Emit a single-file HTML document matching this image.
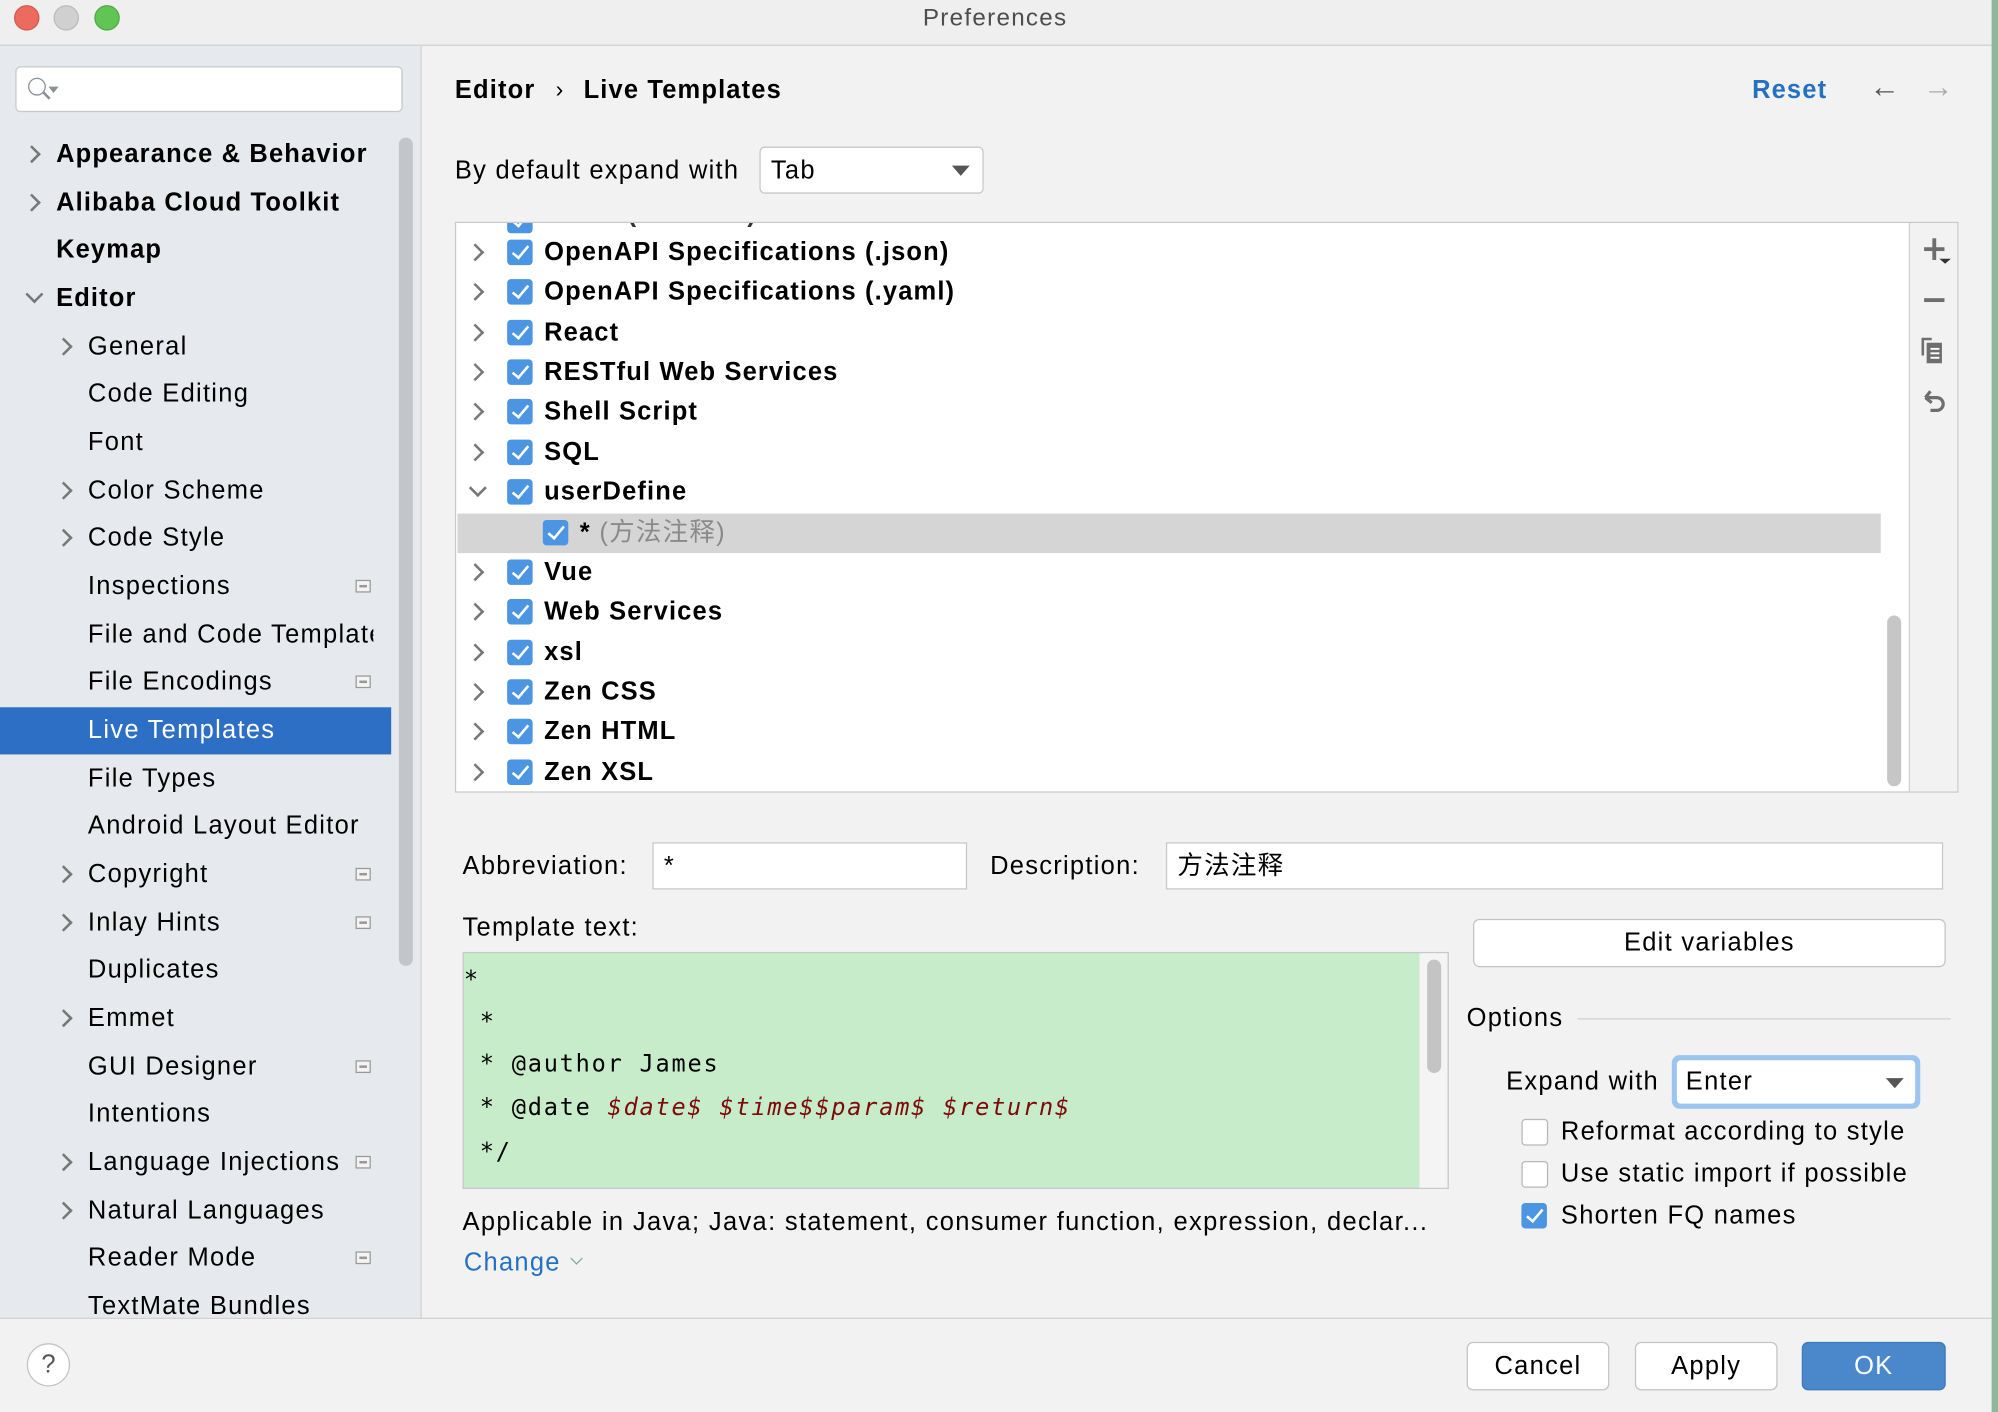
<!DOCTYPE html>
<html><head><meta charset="utf-8"><style>
html,body{margin:0;padding:0;width:1998px;height:1412px;overflow:hidden;background:#8fb89a}
#s{position:absolute;left:0;top:0;width:1568px;height:1108px;transform:scale(1.27423,1.27437);transform-origin:0 0;background:#f2f2f2;font-family:"Liberation Sans","Noto Sans CJK SC",sans-serif;color:#000;overflow:hidden}
.a{position:absolute}
.t{position:absolute;height:26px;line-height:26px;font-size:20px;white-space:nowrap;letter-spacing:1px}
.b{font-weight:bold;letter-spacing:0.9px}
.arr{position:absolute;width:8px;height:8px;border-right:2px solid #777;border-bottom:2px solid #777;transform:rotate(-45deg)}
.arrd{position:absolute;width:8px;height:8px;border-right:2px solid #777;border-bottom:2px solid #777;transform:rotate(45deg)}
.cb{position:absolute;width:20px;height:20px;border-radius:3px;background:#4b95e3}
.cb:after{content:"";position:absolute;left:7px;top:2px;width:5px;height:11px;border-right:2.5px solid #fff;border-bottom:2.5px solid #fff;transform:rotate(40deg)}
.cbe{position:absolute;width:19px;height:19px;border-radius:3px;background:#fff;border:1px solid #b8b8b8}
.ic{position:absolute;width:12px;height:10px;border:1px solid #999;box-sizing:border-box;background:#f4f4f4}
.ic:after{content:"";position:absolute;left:2px;top:3px;width:6px;height:2px;background:#999}
.btn{position:absolute;background:#fff;border:1px solid #c4c4c4;border-radius:5px;box-sizing:border-box;text-align:center;font-size:20px;letter-spacing:1px}
.inp{position:absolute;background:#fff;border:1px solid #c8c8c8;box-sizing:border-box}
.mono{position:absolute;font-family:"DejaVu Sans Mono","Liberation Mono",monospace;font-size:18.5px;letter-spacing:1.4px;white-space:pre;height:26px;line-height:26px}
</style></head><body><div id="s">
<div class="a" style="left:0;top:0;width:1568px;height:35px;background:#efefef;border-bottom:1px solid #d0d0d0"></div>
<div class="a" style="left:11px;top:4px;width:18px;height:18px;border-radius:50%;background:#ec6a5e;border:0.5px solid #d45a4f"></div>
<div class="a" style="left:42px;top:4px;width:18px;height:18px;border-radius:50%;background:#d0d0d0;border:0.5px solid #bbb"></div>
<div class="a" style="left:74px;top:4px;width:18px;height:18px;border-radius:50%;background:#61c554;border:0.5px solid #50a846"></div>
<div class="t" style="left:0;width:1562px;text-align:center;top:2px;color:#4d4d4d;font-size:19px">Preferences</div>
<div class="a" style="left:1563px;top:0;width:5px;height:1108px;background:#8fb89a"></div>

<div class="a" style="left:0;top:36px;width:330px;height:998px;background:#e6e9ed;border-right:1px solid #d4d4d4"></div>
<div class="a" style="left:12px;top:52px;width:304px;height:36px;background:#fff;border:1.5px solid #c8c8c8;border-radius:4px;box-sizing:border-box"></div>
<div class="a" style="left:22px;top:61px;width:12px;height:12px;border:1.8px solid #8a8f95;border-radius:50%"></div>
<div class="a" style="left:33px;top:74px;width:7px;height:2px;background:#8a8f95;transform:rotate(45deg)"></div>
<div class="a" style="left:38px;top:68px;width:0;height:0;border-left:4px solid transparent;border-right:4px solid transparent;border-top:5px solid #8a8f95"></div>
<div class="a" style="left:313px;top:108px;width:11px;height:650px;background:#c3c5c8;border-radius:6px"></div>
<div class="a" style="left:0;top:555px;width:307px;height:37px;background:#2d6fc4"></div>

<div class="arr" style="left:20px;top:116px"></div><div class="t b" style="left:44px;top:108px">Appearance &amp; Behavior</div>
<div class="arr" style="left:20px;top:154px"></div><div class="t b" style="left:44px;top:146px">Alibaba Cloud Toolkit</div>
<div class="t b" style="left:44px;top:183px">Keymap</div>
<div class="arrd" style="left:22px;top:226px"></div><div class="t b" style="left:44px;top:221px">Editor</div>
<div class="arr" style="left:45px;top:267px"></div><div class="t" style="left:69px;top:259px">General</div>
<div class="t" style="left:69px;top:296px">Code Editing</div>
<div class="t" style="left:69px;top:334px">Font</div>
<div class="arr" style="left:45px;top:380px"></div><div class="t" style="left:69px;top:372px">Color Scheme</div>
<div class="arr" style="left:45px;top:417px"></div><div class="t" style="left:69px;top:409px">Code Style</div>
<div class="t" style="left:69px;top:447px">Inspections</div><div class="ic" style="left:279px;top:455px"></div>
<div class="t" style="left:69px;top:485px;width:224px;overflow:hidden">File and Code Templates</div>
<div class="t" style="left:69px;top:522px">File Encodings</div><div class="ic" style="left:279px;top:530px"></div>
<div class="t" style="left:69px;top:560px;color:#fff">Live Templates</div>
<div class="t" style="left:69px;top:598px">File Types</div>
<div class="t" style="left:69px;top:635px">Android Layout Editor</div>
<div class="arr" style="left:45px;top:681px"></div><div class="t" style="left:69px;top:673px">Copyright</div><div class="ic" style="left:279px;top:681px"></div>
<div class="arr" style="left:45px;top:719px"></div><div class="t" style="left:69px;top:711px">Inlay Hints</div><div class="ic" style="left:279px;top:719px"></div>
<div class="t" style="left:69px;top:748px">Duplicates</div>
<div class="arr" style="left:45px;top:794px"></div><div class="t" style="left:69px;top:786px">Emmet</div>
<div class="t" style="left:69px;top:824px">GUI Designer</div><div class="ic" style="left:279px;top:832px"></div>
<div class="t" style="left:69px;top:861px">Intentions</div>
<div class="arr" style="left:45px;top:907px"></div><div class="t" style="left:69px;top:899px">Language Injections</div><div class="ic" style="left:279px;top:907px"></div>
<div class="arr" style="left:45px;top:945px"></div><div class="t" style="left:69px;top:937px">Natural Languages</div>
<div class="t" style="left:69px;top:974px">Reader Mode</div><div class="ic" style="left:279px;top:982px"></div>
<div class="t" style="left:69px;top:1012px">TextMate Bundles</div>

<div class="t b" style="left:357px;top:58px">Editor</div>
<div class="t" style="left:436px;top:57px;font-size:18px">›</div>
<div class="t b" style="left:458px;top:58px">Live Templates</div>
<div class="t b" style="left:1375px;top:58px;color:#2470c2">Reset</div>
<div class="t" style="left:1467px;top:56px;color:#555;font-size:24px">←</div>
<div class="t" style="left:1509px;top:56px;color:#aaa;font-size:24px">→</div>

<div class="t" style="left:357px;top:121px">By default expand with</div>
<div class="inp" style="left:596px;top:115px;width:176px;height:37px;border-radius:4px"></div>
<div class="t" style="left:605px;top:121px">Tab</div>
<div class="a" style="left:747px;top:130px;border-left:7px solid transparent;border-right:7px solid transparent;border-top:8px solid #555"></div>

<div class="a" style="left:357px;top:174px;width:1180px;height:448px;background:#fff;border:1px solid #c9c9c9;box-sizing:border-box;overflow:hidden">
 <div class="a" style="left:1140px;top:0;width:40px;height:448px;background:#f2f2f2;border-left:1.5px solid #d0d0d0"></div>
 <div class="a" style="left:1px;top:228px;width:1117px;height:31px;background:#d5d5d5"></div>
 <div class="cb" style="left:40px;top:-12px"></div><div class="t b" style="left:70px;top:-20px;color:#333">JSON (Xxxxxxx)</div>
</div>
<div class="a" style="left:1481px;top:483px;width:11px;height:134px;background:#c6c6c6;border-radius:6px"></div>

<div class="arr" style="left:368px;top:193px"></div><div class="cb" style="left:398px;top:188px"></div><div class="t b" style="left:427px;top:185px">OpenAPI Specifications (.json)</div>
<div class="arr" style="left:368px;top:224px"></div><div class="cb" style="left:398px;top:219px"></div><div class="t b" style="left:427px;top:216px">OpenAPI Specifications (.yaml)</div>
<div class="arr" style="left:368px;top:256px"></div><div class="cb" style="left:398px;top:251px"></div><div class="t b" style="left:427px;top:248px">React</div>
<div class="arr" style="left:368px;top:287px"></div><div class="cb" style="left:398px;top:282px"></div><div class="t b" style="left:427px;top:279px">RESTful Web Services</div>
<div class="arr" style="left:368px;top:318px"></div><div class="cb" style="left:398px;top:313px"></div><div class="t b" style="left:427px;top:310px">Shell Script</div>
<div class="arr" style="left:368px;top:350px"></div><div class="cb" style="left:398px;top:345px"></div><div class="t b" style="left:427px;top:342px">SQL</div>
<div class="arrd" style="left:370px;top:378px"></div><div class="cb" style="left:398px;top:376px"></div><div class="t b" style="left:427px;top:373px">userDefine</div>
<div class="cb" style="left:426px;top:408px"></div><div class="t" style="left:455px;top:405px"><b>*</b> <span style="color:#8a8a8a">(方法注释)</span></div>
<div class="arr" style="left:368px;top:444px"></div><div class="cb" style="left:398px;top:439px"></div><div class="t b" style="left:427px;top:436px">Vue</div>
<div class="arr" style="left:368px;top:475px"></div><div class="cb" style="left:398px;top:470px"></div><div class="t b" style="left:427px;top:467px">Web Services</div>
<div class="arr" style="left:368px;top:507px"></div><div class="cb" style="left:398px;top:502px"></div><div class="t b" style="left:427px;top:499px">xsl</div>
<div class="arr" style="left:368px;top:538px"></div><div class="cb" style="left:398px;top:533px"></div><div class="t b" style="left:427px;top:530px">Zen CSS</div>
<div class="arr" style="left:368px;top:569px"></div><div class="cb" style="left:398px;top:564px"></div><div class="t b" style="left:427px;top:561px">Zen HTML</div>
<div class="arr" style="left:368px;top:601px"></div><div class="cb" style="left:398px;top:596px"></div><div class="t b" style="left:427px;top:593px">Zen XSL</div>

<svg class="a" style="left:1505px;top:183px" width="30" height="150" viewBox="0 0 30 150">
 <g fill="#6e6e6e">
 <rect x="5" y="11" width="16" height="3"/><rect x="11.5" y="4" width="3" height="17"/>
 <path d="M17 20h9l-4.5 4z" fill="#333"/>
 <rect x="5" y="51" width="16" height="3"/>
 <path d="M3 82h8v2H5v12H3z"/><path d="M7 86h12v16H7z"/>
 </g>
 <g fill="#fff"><rect x="10" y="90" width="7" height="1.5"/><rect x="10" y="93.5" width="7" height="1.5"/><rect x="10" y="97" width="7" height="1.5"/></g>
 <path d="M6 129 L10 124 M6 129 L11 133 M6 129 H15 a5 5 0 0 1 0 10 H10" fill="none" stroke="#6e6e6e" stroke-width="2.5"/>
</svg>

<div class="t" style="left:363px;top:667px">Abbreviation:</div>
<div class="inp" style="left:512px;top:661px;width:247px;height:37px"></div>
<div class="t" style="left:521px;top:667px">*</div>
<div class="t" style="left:777px;top:667px">Description:</div>
<div class="inp" style="left:915px;top:661px;width:610px;height:37px"></div>
<div class="t" style="left:924px;top:667px">方法注释</div>

<div class="t" style="left:363px;top:715px">Template text:</div>
<div class="a" style="left:363px;top:747px;width:774px;height:186px;background:#c7ecca;border:1px solid #c8c8c8;box-sizing:border-box"></div>
<div class="a" style="left:1114px;top:748px;width:22px;height:184px;background:#f4f4f4"></div>
<div class="a" style="left:1120px;top:753px;width:11px;height:89px;background:#c4c4c4;border-radius:6px"></div>
<div class="mono" style="left:364px;top:757px">*</div>
<div class="mono" style="left:364px;top:790px"> *</div>
<div class="mono" style="left:364px;top:823px"> * @author James</div>
<div class="mono" style="left:364px;top:857px"> * @date <i style="color:#7d0a0a">$date$</i> <i style="color:#7d0a0a">$time$$param$</i> <i style="color:#7d0a0a">$return$</i></div>
<div class="mono" style="left:364px;top:892px"> */</div>

<div class="t" style="left:363px;top:946px;letter-spacing:1.05px">Applicable in Java; Java: statement, consumer function, expression, declar...</div>
<div class="t" style="left:364px;top:978px;color:#2470c2">Change</div>
<div class="arrd" style="left:449px;top:984px;width:6px;height:6px;border-color:#8aa;border-width:1.5px"></div>

<div class="btn" style="left:1156px;top:721px;width:371px;height:38px;line-height:36px">Edit variables</div>
<div class="t" style="left:1151px;top:786px">Options</div>
<div class="a" style="left:1238px;top:799px;width:293px;height:1px;background:#d0d0d0"></div>
<div class="t" style="left:1182px;top:836px">Expand with</div>
<div class="a" style="left:1312px;top:828px;width:195px;height:42px;border-radius:6px;background:#9cc4ef"></div>
<div class="a" style="left:1316px;top:832px;width:187px;height:34px;border-radius:3px;background:#fff"></div>
<div class="t" style="left:1323px;top:836px">Enter</div>
<div class="a" style="left:1480px;top:846px;border-left:7px solid transparent;border-right:7px solid transparent;border-top:8px solid #555"></div>
<div class="cbe" style="left:1194px;top:878px"></div><div class="t" style="left:1225px;top:875px">Reformat according to style</div>
<div class="cbe" style="left:1194px;top:911px"></div><div class="t" style="left:1225px;top:908px">Use static import if possible</div>
<div class="cb" style="left:1194px;top:944px"></div><div class="t" style="left:1225px;top:941px">Shorten FQ names</div>

<div class="a" style="left:0;top:1034px;width:1563px;height:1px;background:#d2d2d2"></div>
<div class="a" style="left:21px;top:1054px;width:34px;height:34px;border-radius:50%;background:#fff;border:1px solid #c4c4c4;box-sizing:border-box;text-align:center;line-height:32px;font-size:20px;color:#555">?</div>
<div class="btn" style="left:1151px;top:1053px;width:112px;height:38px;line-height:36px">Cancel</div>
<div class="btn" style="left:1283px;top:1053px;width:112px;height:38px;line-height:36px">Apply</div>
<div class="btn" style="left:1414px;top:1053px;width:113px;height:38px;line-height:36px;background:#4a87cb;border-color:#3f78bb;color:#fff">OK</div>
</div></body></html>
